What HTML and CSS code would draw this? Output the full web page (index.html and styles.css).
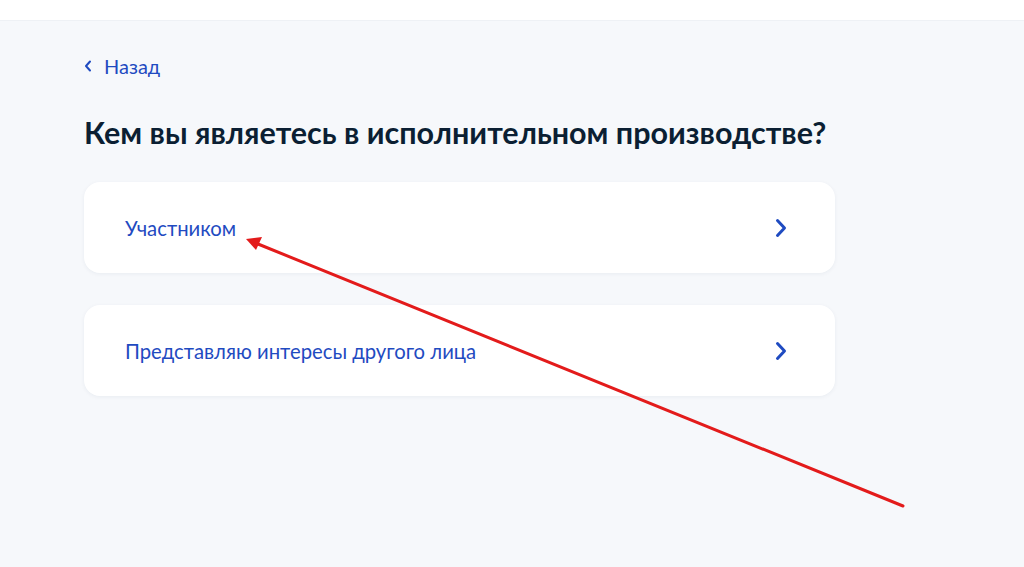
FILE: index.html
```html
<html>
    <head>
        <meta charset="utf-8">
        <link rel="stylesheet" href="styles.css">
    </head>
    <body>
        <div class="header"></div>

        <div class="page">
            <a class="back" href="#">
                <svg class="back-icon" width="8" height="12" viewBox="0 0 8 12"><path d="M6 1.5 L2 6 L6 10.5" fill="none" stroke="currentColor" stroke-width="2" stroke-linecap="round" stroke-linejoin="round"/></svg>
                <span>Назад</span>
            </a>

            <h1 class="title">Кем вы являетесь в исполнительном производстве?</h1>

            <ul class="options">
                <li class="option">
                    <span class="name">Участником</span>
                    <svg class="chevron" width="12" height="20" viewBox="0 0 12 20"><path d="M2.5 2.5 L9.5 10 L2.5 17.5" fill="none" stroke="currentColor" stroke-width="3" stroke-linecap="round" stroke-linejoin="round"/></svg>
                </li>
                <li class="option">
                    <span class="name">Представляю интересы другого лица</span>
                    <svg class="chevron" width="12" height="20" viewBox="0 0 12 20"><path d="M2.5 2.5 L9.5 10 L2.5 17.5" fill="none" stroke="currentColor" stroke-width="3" stroke-linecap="round" stroke-linejoin="round"/></svg>
                </li>
            </ul>
        </div>

        <svg class="pointer" width="1024" height="567" viewBox="0 0 1024 567">
            <line x1="903" y1="506" x2="258" y2="244" stroke="#e31b1b" stroke-width="3" stroke-linecap="round"/>
            <path d="M246 239 L262 237 L256 250 Z" fill="#e31b1b"/>
        </svg>
    </body>
</html>
```

FILE: styles.css
```css
body {
    margin: 0;
    background: #f6f8fb;
    font-family: Lato, "Noto Sans", sans-serif;
    color: #0b1f33;
}

.header {
    height: 20px;
    background: #ffffff;
    border-bottom: 1px solid #eef1f5;
}

.page {
    padding: 34px 0 0 84px;
}

.back {
    display: inline-flex;
    align-items: center;
    gap: 12px;
    color: #1f4bc1;
    font-size: 20px;
    text-decoration: none;
    height: 22px;
}

.title {
    margin: 36px 0 0;
    font-size: 30.5px;
    font-weight: 700;
    line-height: 38px;
}

.options {
    list-style: none;
    margin: 31px 0 0;
    padding: 0;
    width: 751px;
    display: flex;
    flex-direction: column;
    gap: 32px;
}

.option {
    display: flex;
    align-items: center;
    justify-content: space-between;
    height: 91px;
    padding: 0 48px 0 41px;
    background: #ffffff;
    border-radius: 16px;
    box-shadow: 0 1px 4px rgba(17, 44, 90, 0.06);
    color: #1f4bc1;
    font-size: 20.3px;
}

.pointer {
    position: absolute;
    left: 0;
    top: 0;
}
```
